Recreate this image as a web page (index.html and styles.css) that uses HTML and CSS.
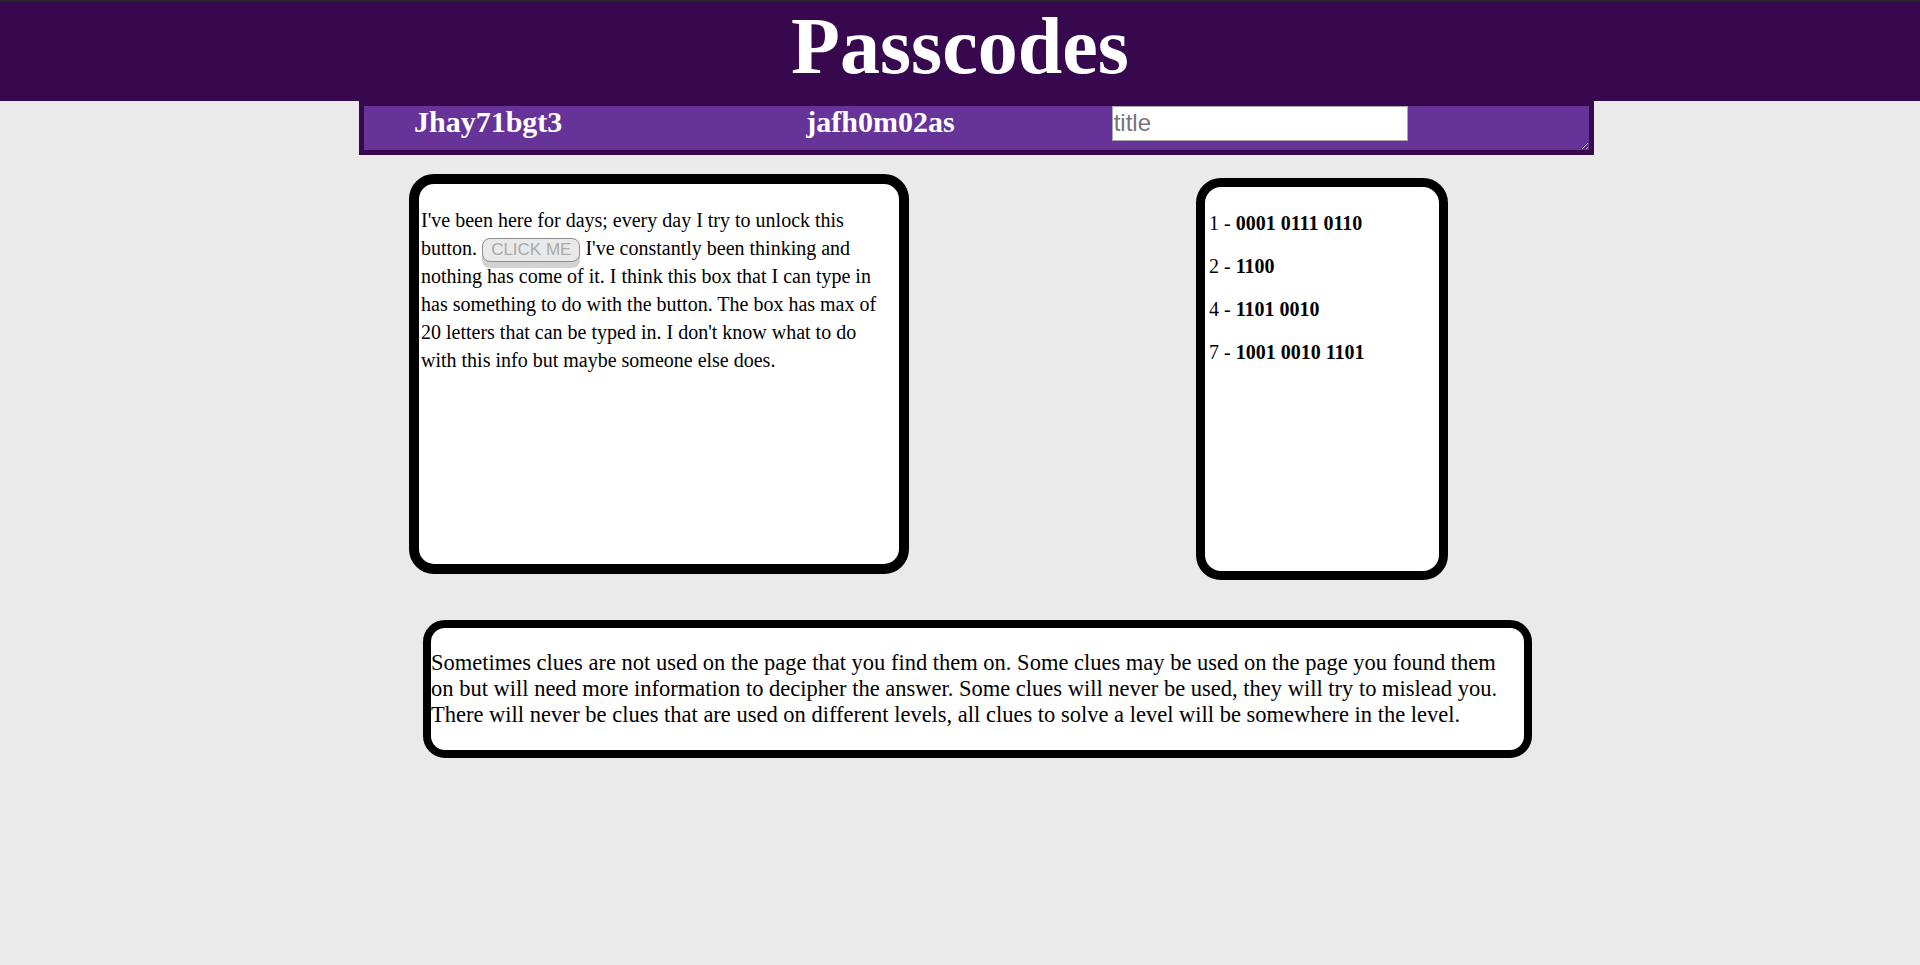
FILE: index.html
```html
<!DOCTYPE html>
<html lang="en">
<head>
    <meta charset="UTF-8">
    <meta name="viewport" content="width=device-width, initial-scale=1.0">
    <title>Passcodes</title>
    <link rel="stylesheet" href="styles.css">
</head>
<body>
    <header class="site-header">
        <h1 class="site-title">Passcodes</h1>
    </header>

    <div class="code-bar">
        <span class="code code-first">Jhay71bgt3</span>
        <span class="code code-second">jafh0m02as</span>
        <textarea class="title-box" placeholder="title" maxlength="20"></textarea>
    </div>

    <div class="clue-row">
        <div class="box story-box">
            <p>I've been here for days; every day I try to unlock this button. <button class="unlock-btn" disabled>CLICK ME</button> I've constantly been thinking and nothing has come of it. I think this box that I can type in has something to do with the button. The box has max of 20 letters that can be typed in. I don't know what to do with this info but maybe someone else does.</p>
        </div>

        <div class="box list-box">
            <p>1 - <b>0001 0111 0110</b></p>
            <p>2 - <b>1100</b></p>
            <p>4 - <b>1101 0010</b></p>
            <p>7 - <b>1001 0010 1101</b></p>
        </div>
    </div>

    <div class="box hint-box">
        <p>Sometimes clues are not used on the page that you find them on. Some clues may be used on the page you found them on but will need more information to decipher the answer. Some clues will never be used, they will try to mislead you. There will never be clues that are used on different levels, all clues to solve a level will be somewhere in the level.</p>
    </div>
</body>
</html>
```

FILE: styles.css
```css
:root {
    --dark-purple: #38084f;
    --mid-purple: #663399;
    --page-bg: #eaeaea;
}

body {
    margin: 0;
    font-family: "Liberation Serif", "Times New Roman", serif;
    background-color: var(--page-bg);
    color: #000;
}

.site-header {
    background-color: var(--dark-purple);
    border-top: 2px solid #262626;
    padding: 4px 0 15px;
    text-align: center;
}

.site-title {
    margin: 0;
    font-size: 80px;
    line-height: 80px;
    font-weight: bold;
    color: #fff;
}

/* top bar with the codes and the title box */
.code-bar {
    width: 1225px;
    height: 44px;
    margin-left: 359px;
    border: 5px solid var(--dark-purple);
    background-color: var(--mid-purple);
    display: flex;
    align-items: flex-start;
    resize: both;
    overflow: hidden;
}

.code {
    color: #fff;
    font-size: 30px;
    line-height: 32px;
    font-weight: bold;
}

.code-first {
    margin-left: 50px;
}

.code-second {
    margin-left: 244px;
}

.title-box {
    margin: 0 0 0 157px;
    width: 296px;
    height: 35px;
    box-sizing: border-box;
    border: 1px solid #a9a9a9;
    padding: 2px 1px;
    font-family: "Liberation Sans", Arial, sans-serif;
    font-size: 24px;
    resize: none;
    outline: none;
}

.title-box::placeholder {
    color: #757575;
}

.clue-row {
    display: flex;
    align-items: flex-start;
    margin: 19px 0 0 409px;
}

.box {
    background-color: #fff;
    border: 10px solid #000;
    border-radius: 25px;
    box-sizing: border-box;
}

.story-box {
    width: 500px;
    height: 400px;
    padding: 2px 4px 2px 2px;
    font-size: 20px;
    line-height: 28px;
}

.story-box p {
    margin: 20px 0;
}

.unlock-btn {
    margin: 0;
    padding: 1px 8px;
    font-family: "Liberation Sans", Arial, sans-serif;
    font-size: 17px;
    color: #a9a9a9;
    background-color: #e9e9e9;
    border: 1px solid #8f8f8f;
    border-radius: 8px;
    box-shadow: 0 6px 0 #d2d2d2;
}

.list-box {
    width: 252px;
    height: 402px;
    margin: 4px 0 0 287px;
    border-width: 9px;
    padding: 5px 4px;
    font-size: 20px;
}

.list-box p {
    margin: 20px 0;
    line-height: 23px;
}

.hint-box {
    width: 1109px;
    margin: 40px 0 0 423px;
    border-width: 8px;
    border-radius: 22px;
    padding: 0 5px 0 0;
    font-size: 22.5px;
}

.hint-box p {
    margin: 22px 0;
}
```
